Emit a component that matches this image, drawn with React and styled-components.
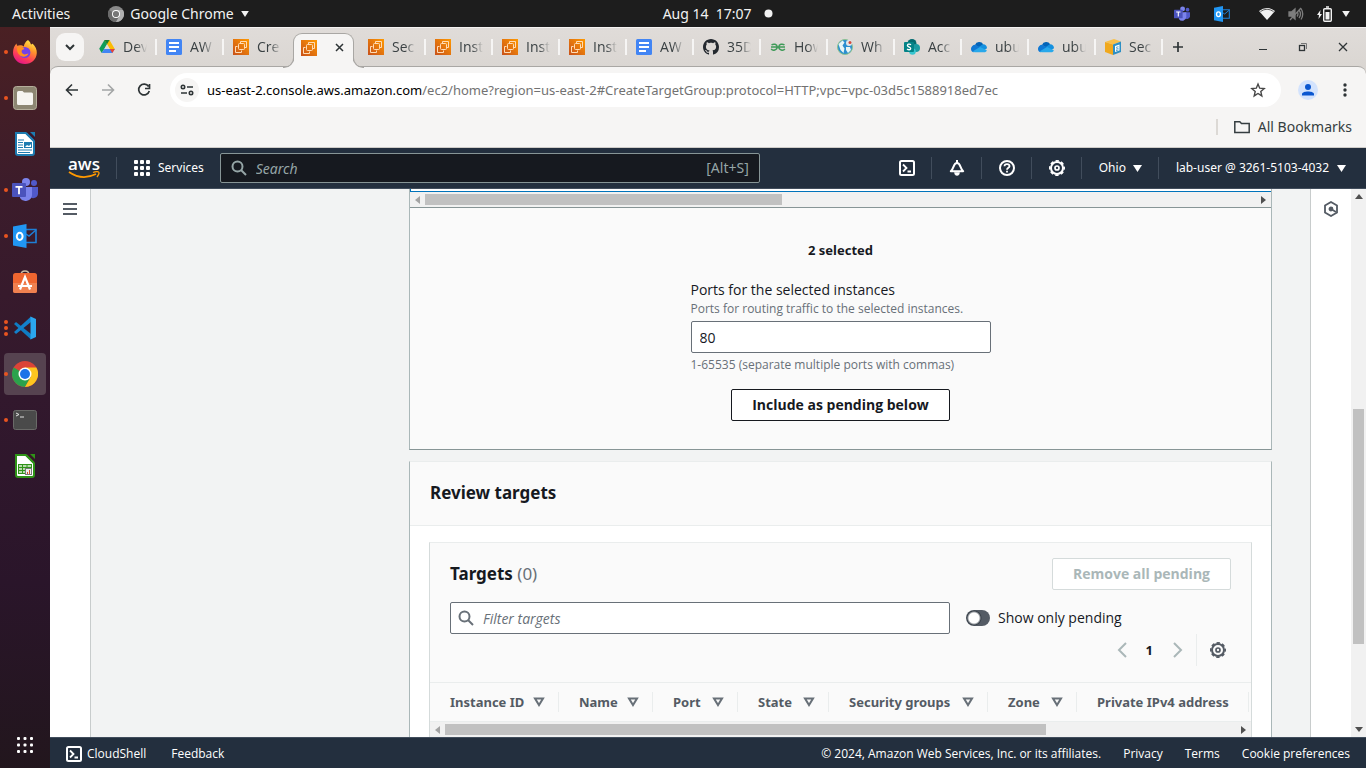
import React from "react";
import styled, { createGlobalStyle, css } from "styled-components";

const sans = `"Noto Sans", "Open Sans", sans-serif`;
const openSans = `"Open Sans", "Noto Sans", sans-serif`;

const Global = createGlobalStyle`
  *, *::before, *::after { box-sizing: border-box; }
  html, body { margin: 0; height: 100%; }
  body { font-family: ${openSans}; font-size: 14px; line-height: 20px; color: #16191f; background: #1d1d1d; }
  button, input { font: inherit; color: inherit; margin: 0; }
  button { background: none; border: 0; padding: 0; }
  a { color: inherit; text-decoration: none; }
  h2, h3, p { margin: 0; }
  svg { display: block; flex: none; }
`;

/* ---------- desktop shell ---------- */

const Desktop = styled.div`
  display: flex;
  flex-direction: column;
  height: 100vh;
  overflow: hidden;
`;

const SystemBar = styled.header`
  display: grid;
  grid-template-columns: 9fr auto 8fr;
  align-items: center;
  flex: none;
  height: 27px;
  padding: 0 15px 0 12px;
  background: #1d1d1d;
  color: #f2f2f2;
  font-family: ${sans};
  font-size: 14px;
`;

const SystemGroup = styled.div`
  display: flex;
  align-items: center;
  justify-content: ${(p) => (p.$end ? "flex-end" : "flex-start")};
  gap: ${(p) => p.$gap}px;
`;

const SystemButton = styled.button`
  display: flex;
  align-items: center;
  gap: 6px;
`;

const Workspace = styled.div`
  display: flex;
  flex: 1;
  min-height: 0;
`;

const Dock = styled.nav`
  display: flex;
  flex-direction: column;
  gap: 4px;
  flex: none;
  width: 50px;
  padding: 4px 4px 2px;
  background: linear-gradient(#4a2023, #3c1c2b 22%, #32182d 50%, #2a152a 75%, #22161d);
`;

const DockItem = styled.button`
  position: relative;
  display: flex;
  align-items: center;
  justify-content: center;
  flex: none;
  height: 42px;
  border-radius: 4px;
  background: ${(p) => (p.$active ? "#564350" : "transparent")};
  margin-top: ${(p) => (p.$last ? "auto" : "0")};
`;

const DockDots = styled.span`
  position: absolute;
  left: 0;
  display: grid;
  gap: 2px;
  i { width: 4px; height: 4px; border-radius: 2px; background: #e95420; }
`;

/* ---------- browser ---------- */

const Browser = styled.div`
  display: flex;
  flex-direction: column;
  flex: 1;
  min-width: 0;
  background: linear-gradient(#e0dcd9, #dad6d2 40px);
`;

const TabStrip = styled.div`
  display: flex;
  align-items: center;
  flex: none;
  height: 40px;
  margin-bottom: -1px;
  padding: 0 16px 1px 6px;
  border-top: 1px solid #f4f2f1;
`;

const TabSearch = styled.button`
  display: grid;
  place-items: center;
  width: 28px;
  height: 28px;
  border-radius: 9px;
  background: #f6f5f4;
  margin-right: 6px;
`;

const Tab = styled.button`
  position: relative;
  display: flex;
  align-items: center;
  flex: none;
  gap: 8px;
  width: 67px;
  height: 16px;
  padding: 0 0 0 9px;
  border-right: 2px solid ${(p) => (p.$noRule ? "transparent" : "#f6f5f4")};
  color: #3a4143;
`;

const TabTitle = styled.span`
  width: 30px;
  overflow: hidden;
  white-space: nowrap;
  text-align: left;
  mask-image: linear-gradient(90deg, #000 13px, transparent 24px);
`;

const flare = css`
  content: "";
  position: absolute;
  bottom: -1px;
  width: 11px;
  height: 11px;
  border-bottom: 1px solid #a9a7a4;
`;

const ActiveTab = styled.div`
  position: relative;
  display: flex;
  align-items: center;
  justify-content: space-between;
  align-self: flex-end;
  flex: none;
  z-index: 1;
  width: 61px;
  height: 34px;
  margin: 0 5px -1px 2px;
  padding: 0 9px 6px 7px;
  border: 1px solid #a9a7a4;
  border-bottom: 0;
  border-radius: 9px 9px 0 0;
  background: #f6f5f4;
  &::before {
    ${flare}
    left: -11px;
    border-right: 1px solid #a9a7a4;
    border-bottom-right-radius: 10px;
    box-shadow: 4px 4px 0 #f6f5f4;
  }
  &::after {
    ${flare}
    right: -11px;
    border-left: 1px solid #a9a7a4;
    border-bottom-left-radius: 10px;
    box-shadow: -4px 4px 0 #f6f5f4;
  }
`;

const WindowButtons = styled.div`
  display: flex;
  gap: 26px;
  margin-left: auto;
`;

const NewTab = styled.button`
  margin-left: 9px;
`;

const BrowserTop = styled.div`
  flex: none;
  border-top: 1px solid #a9a7a4;
  border-bottom: 1px solid #cfccc8;
  border-radius: 8px 8px 0 0;
  background: #f6f5f4;
  overflow: hidden;
`;

const Toolbar = styled.div`
  display: flex;
  align-items: center;
  height: 46px;
  padding: 0 13px 0 14px;
`;

const NavButtons = styled.div`
  display: flex;
  gap: 20px;
  margin-right: 18px;
`;

const Omnibox = styled.div`
  display: flex;
  align-items: center;
  flex: 1;
  min-width: 0;
  height: 34px;
  padding: 0 15px 0 5px;
  border-radius: 17px;
  background: #fff;
`;

const SiteInfo = styled.button`
  display: grid;
  place-items: center;
  width: 24px;
  height: 24px;
  border-radius: 12px;
  background: #f6f5f4;
  margin-right: 8px;
`;

const Url = styled.span`
  flex: 1;
  min-width: 0;
  overflow: hidden;
  white-space: nowrap;
  font-family: ${sans};
  font-size: 13px;
  color: #727272;
  b { font-weight: 400; color: #000; }
`;

const ToolbarEnd = styled.div`
  display: flex;
  align-items: center;
  gap: 19px;
  margin-left: 17px;
`;

const Bookmarks = styled.div`
  display: flex;
  align-items: center;
  justify-content: flex-end;
  height: 34px;
  padding: 0 14px 6px;
`;

const BookmarkFolder = styled.button`
  display: flex;
  align-items: center;
  gap: 8px;
  padding-left: 16px;
  border-left: 2px solid #dcd9d5;
  line-height: 16px;
  font-family: ${sans};
  color: #353d40;
`;

/* ---------- console ---------- */

const ConsoleHeader = styled.header`
  display: flex;
  align-items: center;
  flex: none;
  height: 41px;
  padding: 0 20px 0 18px;
  border-bottom: 1px solid #414d5c;
  background: #232f3e;
  color: #fff;
  font-family: ${sans};
  font-size: 12px;
`;

const AwsLogo = styled.a`
  display: grid;
  justify-items: center;
  width: 32px;
  font-family: ${openSans};
  font-size: 17px;
  font-weight: 600;
  line-height: 12px;
  span { height: 13px; }
`;

const Rule = styled.span`
  flex: none;
  width: 1px;
  height: 22px;
  background: #414d5c;
  margin: 0 17px 0 16px;
`;

const HeaderButton = styled.button`
  display: flex;
  align-items: center;
  gap: ${(p) => p.$gap || 8}px;
  white-space: nowrap;
`;

const HeaderSearch = styled.label`
  display: flex;
  align-items: center;
  flex: 0 1 540px;
  gap: 9px;
  height: 30px;
  margin: 0 auto 0 16px;
  padding: 0 10px;
  border: 1px solid #879596;
  border-radius: 2px;
  background: #16191f;
  color: #95a5a6;
  font-size: 14px;
  input {
    flex: 1;
    min-width: 0;
    padding: 2px 0 0;
    border: 0;
    background: none;
    outline: 0;
  }
  input::placeholder { color: #95a5a6; font-style: italic; opacity: 1; }
`;

const ConsoleBody = styled.div`
  display: flex;
  flex: 1;
  min-height: 0;
  background: #f2f3f3;
`;

const SideRail = styled.aside`
  display: flex;
  justify-content: center;
  align-items: flex-start;
  flex: none;
  width: 41px;
  padding-top: 12px;
  background: #fff;
  border: 0 solid #c8cccc;
  border-width: ${(p) => (p.$right ? "0 0 0 1px" : "0 1px 0 0")};
`;

const Main = styled.main`
  display: grid;
  grid-template-columns: 280px minmax(0, 1fr);
  align-items: start;
  flex: 1;
  min-width: 0;
  padding: 0 38px;
  overflow: hidden;
`;

const Steps = styled.div``;

const Card = styled.section`
  border: 1px solid #aab7b8;
  border-top: ${(p) => (p.$cut ? "0" : "1px solid #eaeded")};
  border-bottom-color: #879596;
  background: #fff;
  margin-bottom: 11px;
`;

const TableTail = styled.div`
  height: 3px;
  border-left: 1px solid #0073bb;
  border-bottom: 1px solid #0073bb;
`;

const ScrollTrack = styled.div`
  display: flex;
  align-items: center;
  flex-direction: ${(p) => (p.$vertical ? "column" : "row")};
  justify-content: space-between;
  flex: none;
  height: ${(p) => (p.$vertical ? "auto" : "15px")};
  width: ${(p) => (p.$vertical ? "15px" : "auto")};
  padding: ${(p) => (p.$vertical ? "5px 0" : "0 5px")};
  background: #f1f1f1;
`;

const ScrollLane = styled.div`
  position: relative;
  flex: 1;
  align-self: stretch;
  margin: ${(p) => (p.$vertical ? "5px 2px" : "2px 5px")};
`;

const ScrollThumb = styled.div`
  position: absolute;
  background: #c1c1c1;
  ${(p) =>
    p.$vertical
      ? css`top: ${p.$start}; height: ${p.$size}; left: 0; right: 0;`
      : css`left: ${p.$start}; width: ${p.$size}; top: 0; bottom: 0;`}
`;

const PendingForm = styled.form`
  display: flex;
  flex-direction: column;
  align-items: center;
  padding: 32px 20px 28px;
  border-top: 1px solid #879596;
  background: #fafafa;
`;

const SelectedCount = styled.p`
  font-family: ${sans};
  font-size: 13px;
  font-weight: 700;
  margin-bottom: 20px;
`;

const Field = styled.div`
  display: flex;
  flex-direction: column;
  width: 300px;
`;

const FieldLabel = styled.label`
  line-height: 20px;
`;

const Hint = styled.p`
  font-size: 12px;
  line-height: ${(p) => (p.$after ? 24 : 18)}px;
  color: #687078;
`;

const PortInput = styled.input`
  height: 32px;
  padding: 0 8px;
  border: 1px solid #687078;
  border-radius: 2px;
  background: #fff;
  margin-top: 3px;
`;

const ActionButton = styled.button`
  height: 32px;
  padding: 0 20px;
  border: 1px solid ${(p) => (p.disabled ? "#d5dbdb" : "#16191f")};
  border-radius: 2px;
  background: #fff;
  color: ${(p) => (p.disabled ? "#aab7b8" : "#16191f")};
  font-weight: 700;
  white-space: nowrap;
`;

const FormAction = styled.div`
  margin-top: 12px;
`;

const CardHeader = styled.div`
  padding: 20px 20px 21px;
  border-bottom: 1px solid #eaeded;
  background: #fafafa;
`;

const Title = styled.h2`
  font-family: ${sans};
  font-size: 17px;
  line-height: 22px;
  font-weight: 700;
  span { font-weight: 400; color: #687078; }
`;

const CardContent = styled.div`
  padding: 16px 19px;
`;

const InnerCard = styled.div`
  border: 1px solid #d5dbdb;
  border-top-color: #eaeded;
  background: #fafafa;
`;

const TargetsHead = styled.div`
  display: flex;
  align-items: center;
  justify-content: space-between;
  padding: 15px 20px 12px;
`;

const FilterRow = styled.div`
  display: flex;
  align-items: center;
  gap: 16px;
  padding: 0 20px;
`;

const FilterBox = styled.label`
  display: flex;
  align-items: center;
  flex: 0 1 500px;
  gap: 9px;
  height: 32px;
  padding: 0 7px;
  border: 1px solid #687078;
  border-radius: 2px;
  background: #fff;
  color: #687078;
  input {
    flex: 1;
    min-width: 0;
    padding: 2px 0 0;
    border: 0;
    outline: 0;
    background: none;
  }
  input::placeholder { color: #687078; font-style: italic; opacity: 1; }
`;

const ToggleLabel = styled.label`
  display: flex;
  align-items: center;
  gap: 8px;
  white-space: nowrap;
`;

const Toggle = styled.input`
  appearance: none;
  width: 24px;
  height: 16px;
  border-radius: 8px;
  background: radial-gradient(circle at 8px 8px, #fff 5px, #3a424b 7px, #545b64 8px);
`;

const Pager = styled.div`
  display: flex;
  align-items: center;
  justify-content: flex-end;
  height: 32px;
  padding: 0 25px 0 20px;
  margin-bottom: 16px;
`;

const PageNumber = styled.button`
  margin: 0 16px;
  font-family: ${sans};
  font-size: 13px;
  font-weight: 700;
`;

const PagerSettings = styled.div`
  display: flex;
  align-items: center;
  height: 32px;
  margin-left: 11px;
  padding-left: 13px;
  border-left: 1px solid #eaeded;
  color: #545b64;
`;

const TableWrap = styled.div`
  overflow: hidden;
  border-top: 1px solid #eaeded;
  border-bottom: 1px solid #eaeded;
`;

const Table = styled.table`
  table-layout: fixed;
  width: 819px;
  border-collapse: collapse;
`;

const HeadCell = styled.th`
  width: ${(p) => p.$width}px;
  height: 38px;
  padding: 0;
`;

const HeadButton = styled.button`
  display: flex;
  align-items: center;
  justify-content: space-between;
  width: 100%;
  height: 20px;
  padding: 0 13px 0 20px;
  border-right: 1px solid #eaeded;
  color: #545b64;
  font-family: ${sans};
  font-size: 13px;
  font-weight: 700;
  white-space: nowrap;
`;

const Footer = styled.footer`
  display: flex;
  align-items: center;
  flex: none;
  height: 31px;
  padding: 1px 16px 0;
  border-top: 1px solid #414d5c;
  background: #232f3e;
  color: #fff;
  font-size: 12px;
  white-space: nowrap;
`;

const FooterGroup = styled.div`
  display: flex;
  align-items: center;
  gap: ${(p) => p.$gap}px;
  margin-left: ${(p) => (p.$end ? "auto" : "0")};
`;

/* ---------- icons ---------- */

const Line = ({ size = 16, box = 16, width = 2, color = "currentColor", children, ...rest }) => (
  <svg width={size} height={size} viewBox={`0 0 ${box} ${box}`} fill="none" stroke={color} strokeWidth={width} aria-hidden="true" {...rest}>
    {children}
  </svg>
);

const Caret = ({ w = 9, h = 7 }) => (
  <svg width={w} height={h} viewBox="0 0 9 7" aria-hidden="true"><path d="M0 0h9L4.500 7z" fill="currentColor" /></svg>
);

const Arrow = ({ dir, color = "#505050" }) => {
  const d = { left: "M5 0v8L0 4z", right: "M0 0v8l5-4z", up: "M0 5h8L4 0z", down: "M0 0h8L4 5z" }[dir];
  const across = dir === "left" || dir === "right";
  return <svg width={across ? 5 : 8} height={across ? 8 : 5} aria-hidden="true"><path d={d} fill={color} /></svg>;
};

const SearchIcon = () => (
  <Line><circle cx="6.500" cy="6.500" r="5" /><path d="M10 10l5 5" /></Line>
);

const ShellIcon = () => (
  <Line><rect x="1" y="1" width="14" height="14" rx="1.500" /><path d="M4 4.500L7.500 8 4 11.500M8.500 11.500H12" strokeWidth="1.800" /></Line>
);

const GearIcon = () => (
  <Line>
    <circle cx="8" cy="8" r="6" />
    <circle cx="8" cy="8" r="7.200" strokeWidth="1.600" strokeDasharray="3.400 2.255" strokeDashoffset="1.700" />
    <circle cx="8" cy="8" r="2" strokeWidth="1.700" />
  </Line>
);

const BellIcon = () => (
  <Line>
    <path d="M8 0v3M1.800 11.200C5 8.500 4.300 3 8 3s3 5.500 6.200 8.200z" strokeLinejoin="round" />
    <path d="M5.500 12.500h5a2.500 3 0 01-5 0z" fill="currentColor" strokeWidth="0.500" />
  </Line>
);

const HelpIcon = () => (
  <Line><circle cx="8" cy="8" r="7" /><path d="M5.500 6.200C5.500 3.300 10.500 3.400 10.500 6.200 10.500 7.800 8 7.800 8 9.800M8 10.800v1.800" strokeWidth="1.800" /></Line>
);

const DotGrid = ({ size, step, dot, round }) => (
  <svg width={size} height={size} aria-hidden="true">
    {[0, 1, 2].map((r) => [0, 1, 2].map((c) => (
      <rect key={`${r}${c}`} x={c * step} y={r * step} width={dot} height={dot} rx={round} fill="#fff" />
    )))}
  </svg>
);

const Ec2Icon = () => (
  <svg width="16" height="16" aria-hidden="true">
    <defs><linearGradient id="ec2" x1="0" y1="1" x2="1" y2="0"><stop offset="0" stopColor="#c8511b" /><stop offset="1" stopColor="#f90" /></linearGradient></defs>
    <rect width="16" height="16" fill="url(#ec2)" />
    <g fill="none" stroke="#ffdcb5" strokeWidth="1"><path d="M7.500 4.500V2.500h6v6h-2" /><rect x="5.500" y="4.500" width="6" height="6" rx="1" /><path d="M4.500 7.500h-2v6h6v-2" /></g>
  </svg>
);

const DriveIcon = () => (
  <svg width="16" height="16" viewBox="0 0 16 16" aria-hidden="true">
    <path d="M5.500 1h5L5.300 10 2.700 14 .2 9.800z" fill="#0f9d58" />
    <path d="M5.500 1h5l5.300 9h-5z" fill="#fbbc04" />
    <path d="M5.300 10h10.500l-2.500 4H2.700z" fill="#4285f4" />
    <path d="M10.800 10h5l-2.500 4z" fill="#ea4335" />
    <path d="M5.500 1h5L8 5.300z" fill="#188038" />
    <path d="M8 5.300l2.800 4.700H5.300z" fill="#e0dcd9" />
  </svg>
);

const DocsIcon = () => (
  <svg width="16" height="16" aria-hidden="true"><rect width="16" height="16" rx="1.500" fill="#4285f4" /><path d="M3 4h10M3 8h10M3 12h7" stroke="#fff" strokeWidth="2" /></svg>
);

const GithubIcon = () => (
  <svg width="16" height="16" viewBox="0 0 16 16" aria-hidden="true">
    <path fill="#24292f" d="M8 0C3.580 0 0 3.580 0 8c0 3.540 2.290 6.530 5.470 7.590.4.070.55-.17.55-.38 0-.19-.01-.82-.01-1.490-2.010.37-2.530-.49-2.690-.94-.09-.23-.48-.94-.82-1.130-.28-.15-.68-.52-.01-.53.63-.01 1.080.58 1.230.82.72 1.210 1.870.87 2.330.66.07-.52.28-.87.51-1.070-1.780-.2-3.640-.89-3.640-3.950 0-.87.31-1.590.82-2.150-.08-.2-.36-1.020.08-2.120 0 0 .67-.21 2.200.82.64-.18 1.320-.27 2-.27s1.360.09 2 .27c1.530-1.040 2.200-.82 2.200-.82.44 1.100.16 1.920.08 2.120.51.56.82 1.270.82 2.150 0 3.070-1.870 3.750-3.650 3.950.29.25.54.73.54 1.480 0 1.070-.01 1.930-.01 2.200 0 .21.15.46.55.38A8.010 8.010 0 0016 8c0-4.420-3.580-8-8-8z" />
  </svg>
);

const GfgIcon = () => (
  <Line width={1.500} color="#3f9a58"><path d="M1.500 6C3.500 4.500 7.200 5 7.200 8s-4.500 4.300-6 1.800M14.500 6C12.500 4.500 8.800 5 8.800 8s4.500 4.300 6 1.800M1 8h14" /></Line>
);

const GlobeIcon = () => (
  <svg width="16" height="16" aria-hidden="true">
    <circle cx="8" cy="8" r="7.500" fill="#2b8fd0" stroke="#8cc28f" />
    <path d="M1.500 5l4-3.500 2 2-2 3 2 3-1 4.500-3-3z" fill="#e8f5f5" /><path d="M9 8l4 0 1 3-3 3-2-3z" fill="#e8f5f5" />
    <circle cx="12" cy="4" r="3" fill="#dfe6ea" /><circle cx="13" cy="3.500" r="1.500" fill="#d34a3a" />
  </svg>
);

const SharePointIcon = () => (
  <svg width="16" height="16" aria-hidden="true">
    <circle cx="8" cy="4.500" r="4.500" fill="#036c70" /><circle cx="12" cy="9" r="4" fill="#1a9ba1" /><circle cx="8.500" cy="12.500" r="3.300" fill="#37c6d0" />
    <rect y="3" width="10" height="10" rx="1" fill="#038387" />
    <path d="M7 5.800C5.500 4.500 3 5.200 3.500 6.800S7 8 6.700 9.700 4 10.700 3 9.900" fill="none" stroke="#fff" strokeWidth="1.300" />
  </svg>
);

const OneDriveIcon = () => (
  <svg width="16" height="16" aria-hidden="true">
    <path d="M4 6a4.600 4.600 0 018.200-.8L9 9z" fill="#0364b8" /><path d="M0 10a4 4 0 014.500-4.100L11 9l-8 4.300A3.300 3.300 0 010 10z" fill="#0f78d4" />
    <path d="M12 5.300c2.700 0 4 1.800 4 4l-3 2-5-3.500z" fill="#1490df" /><path d="M1.500 12.500L9 8l6.800 3.200c-.3 1.300-1.300 2.100-2.800 2.100H4z" fill="#28a8ea" />
  </svg>
);

const BoxIcon = () => (
  <svg width="16" height="16" aria-hidden="true">
    <path d="M0 3l9-3 7 2.500-8 3z" fill="#f7c04a" /><path d="M0 3l8 2.500V16l-8-3z" fill="#f0a81c" /><path d="M8 5.500l8-3V13l-8 3z" fill="#2d8fc4" />
    <path d="M10 7l4.500-1.500v6L10 13z" fill="#fff" /><path d="M11 8.500l2.500-.8M11 10.200l2.500-.8M11 11.700l2.500-.8" stroke="#2d8fc4" strokeWidth="0.800" />
  </svg>
);

const TeamsIcon = ({ size }) => (
  <svg width={size} height={size} viewBox="0 0 26 26" aria-hidden="true">
    <circle cx="22" cy="6" r="3" fill="#5059c9" /><path d="M17 10h9v7a5 5 0 01-9 2z" fill="#5059c9" />
    <circle cx="14" cy="5" r="4" fill="#7b83eb" /><path d="M8 10h12v8a6.500 6.500 0 01-12 3z" fill="#7b83eb" />
    <rect y="6" width="14" height="14" rx="1" fill="#4b53bc" /><path d="M3.500 9.800h7M7 9.800v7.400" stroke="#fff" strokeWidth="1.800" />
  </svg>
);

const OutlookIcon = ({ size }) => (
  <svg width={size} height={size} viewBox="0 0 24 24" aria-hidden="true">
    <path d="M12 5.500h11v13H12" fill="none" stroke="#1e7fd6" strokeWidth="1.600" /><path d="M13 10l3 2 7-6" fill="none" stroke="#1e7fd6" strokeWidth="1.500" />
    <path d="M0 2.500L13.500 0v24L0 21.500z" fill="#2196f3" /><ellipse cx="6.700" cy="12.300" rx="2.900" ry="3.600" fill="none" stroke="#fff" strokeWidth="2" />
  </svg>
);

const FirefoxIcon = () => (
  <svg width="26" height="26" viewBox="0 0 26 26" aria-hidden="true">
    <defs><linearGradient id="ff" x1="0.800" y1="0" x2="0.300" y2="1"><stop offset="0" stopColor="#fff44f" /><stop offset="0.350" stopColor="#ff9a2a" /><stop offset="0.700" stopColor="#ff4056" /><stop offset="1" stopColor="#e1148b" /></linearGradient></defs>
    <path d="M16 1c2 1.500 2.500 3 3 4.500 1 0 1.500-1 1.500-1 3 3 4.500 6 4.300 9.500C24.500 20.500 19.500 25 13 25S1 20.200 1 13.500C1 9.800 2.500 6.500 4.500 4.500l.5 2.200 3-.5c1.500 0 3 .3 3.800 1.300C12 5 13.500 2.500 16 1z" fill="url(#ff)" />
    <circle cx="12.800" cy="13.500" r="5.600" fill="#7542e5" /><path d="M5 8.500c3-1 6-.5 7.500 1.500L10 11c-1 2 0 4 2.500 4.500 1.500 0 2.500-1 4-1-1 3-6 4.500-9 1.500-2-2-2.800-4.500-2.500-7.500z" fill="#ff8f1f" />
  </svg>
);

const FilesIcon = () => (
  <svg width="24" height="24" aria-hidden="true"><rect x="0.500" y="0.500" width="23" height="23" rx="3" fill="#8d8672" stroke="#b5ae9b" /><path d="M4 6.500Q4 5 5.500 5h4l1.500 1.500h7.500Q20 6.500 20 8v9.500q0 1.500-1.500 1.500h-13Q4 19 4 17.500z" fill="#f6f4f0" /></svg>
);

const OfficeIcon = ({ color, sheet }) => (
  <svg width="22" height="24" aria-hidden="true">
    <path d="M2 1h10l8 8v12q0 2-2 2H4q-2 0-2-2z" fill="#fff" stroke={color} strokeWidth="2" />
    <path d="M12 0h9v9z" fill="#38172a" /><path d="M12 1l8 8" stroke={color} strokeWidth="2" /><path d="M16 0h5v5z" fill={color} />
    {sheet ? (
      <><rect x="4" y="10" width="14" height="10" fill={color} /><path d="M5 12h12M5 15h12M5 18h6" stroke="#e4f4dc" strokeWidth="1.500" /><path d="M8.500 10v10M13 10v10" stroke={color} /><rect x="11.500" y="14.500" width="6" height="6" fill="#eee" stroke="#777" /><path d="M13.500 20v-2M15.500 20v-4" stroke="#d0512b" /></>
    ) : (
      <><path d="M4 8h6M4 10.500h5M4 13h5M4 15.500h5M4 18h14M4 20.500h12" stroke={color} strokeWidth="1.200" /><rect x="10" y="10" width="8" height="6" fill={color} /><path d="M11 15l2-2 2 1 2-2v3z" fill="#fff" /></>
    )}
  </svg>
);

const SoftwareIcon = () => (
  <svg width="24" height="24" aria-hidden="true">
    <path d="M8 5Q8 1 12 1t4 4" fill="none" stroke="#c9bfa8" strokeWidth="1.500" /><rect y="3" width="24" height="20" rx="2.500" fill="#ef6630" /><path d="M0 13h24v8q0 2-2 2H2q-2 0-2-2z" fill="#f08150" />
    <path d="M7 19.500L12 7l5 12.500M5 16h14" fill="none" stroke="#fff" strokeWidth="2.200" />
  </svg>
);

const CodeIcon = () => (
  <svg width="24" height="24" aria-hidden="true">
    <path d="M1 8l2-2 15 12v5.500z" fill="#0f7cc4" /><path d="M1 16l2 2L18 6V.5z" fill="#1380cc" /><path d="M17.500.5L23 3v18l-5.500 2.500z" fill="#2ba6ee" />
  </svg>
);

const ChromeIcon = ({ size = 26, gray }) => (
  <svg width={size} height={size} viewBox="0 0 26 26" aria-hidden="true">
    <circle cx="13" cy="13" r="13" fill={gray ? "#8a8a8a" : "#db4437"} />
    <path d="M13 13L1.740 6.500A13 13 0 0013 26l5.600-9.800z" fill={gray ? "#6b6b6b" : "#2ba24c"} />
    <path d="M13 13l5.600 3.200L13 26A13 13 0 0024.300 6.500H13z" fill={gray ? "#b0b0b0" : "#fdc61f"} />
    <circle cx="13" cy="13" r="6.500" fill="#fff" /><circle cx="13" cy="13" r="5" fill={gray ? "#777" : "#1a73e8"} />
  </svg>
);

const TerminalIcon = () => (
  <svg width="24" height="20" aria-hidden="true"><rect x="0.500" y="0.500" width="23" height="19" rx="2" fill="#4a4a4a" stroke="#6a6a68" /><path d="M3 3l3 1.500L3 6M7 7h4" fill="none" stroke="#e0e0e0" /></svg>
);

/* ---------- data ---------- */

const dockApps = [
  { name: "Firefox", icon: <FirefoxIcon />, dots: 1 },
  { name: "Files", icon: <FilesIcon />, dots: 1 },
  { name: "LibreOffice Writer", icon: <OfficeIcon color="#1d7bb0" />, dots: 0 },
  { name: "Teams", icon: <TeamsIcon size={26} />, dots: 1 },
  { name: "Outlook", icon: <OutlookIcon size={24} />, dots: 1 },
  { name: "Software", icon: <SoftwareIcon />, dots: 0 },
  { name: "Code", icon: <CodeIcon />, dots: 3 },
  { name: "Chrome", icon: <ChromeIcon />, dots: 1, active: true },
  { name: "Terminal", icon: <TerminalIcon />, dots: 1 },
  { name: "LibreOffice Calc", icon: <OfficeIcon color="#2f9318" sheet />, dots: 0 },
];

const tabs = [
  { title: "Dev", icon: <DriveIcon /> },
  { title: "AW", icon: <DocsIcon /> },
  { title: "Cre", icon: <Ec2Icon />, noRule: true },
  { active: true },
  { title: "Sec", icon: <Ec2Icon /> },
  { title: "Inst", icon: <Ec2Icon /> },
  { title: "Inst", icon: <Ec2Icon /> },
  { title: "Inst", icon: <Ec2Icon /> },
  { title: "AW", icon: <DocsIcon /> },
  { title: "35D", icon: <GithubIcon /> },
  { title: "How", icon: <GfgIcon /> },
  { title: "Wh", icon: <GlobeIcon /> },
  { title: "Acc", icon: <SharePointIcon /> },
  { title: "ubu", icon: <OneDriveIcon /> },
  { title: "ubu", icon: <OneDriveIcon /> },
  { title: "Sec", icon: <BoxIcon /> },
];

const columns = [
  ["Instance ID", 129],
  ["Name", 94],
  ["Port", 85],
  ["State", 91],
  ["Security groups", 159],
  ["Zone", 89],
  ["Private IPv4 address", 172],
];

/* ---------- sections ---------- */

const SystemStatus = () => (
  <SystemBar>
    <SystemGroup $gap={38}>
      <SystemButton>Activities</SystemButton>
      <SystemButton><ChromeIcon size={16} gray />Google Chrome <Caret w={10} h={6} /></SystemButton>
    </SystemGroup>
    <SystemGroup $gap={12}>
      <span>Aug 14&nbsp; 17:07</span>
      <svg width="9" height="9" aria-hidden="true"><circle cx="4.500" cy="4.500" r="4" fill="#f2f2f2" /></svg>
    </SystemGroup>
    <SystemGroup $gap={29} $end>
      <SystemGroup $gap={24}>
        <TeamsIcon size={16} />
        <OutlookIcon size={16} />
      </SystemGroup>
      <SystemGroup $gap={13}>
        <svg width="16" height="14" aria-hidden="true"><path d="M0 4Q8-2 16 4L8 13z" fill="#f2f2f2" /><path d="M1.500 4.500Q8 0 14.500 4.500" fill="none" stroke="#1d1d1d" strokeWidth="0.700" /></svg>
        <Line color="#7d7d7d" width={1.300}><path d="M1 6h2.500L7 3v10L3.500 10H1z" fill="#7d7d7d" /><path d="M9 5.500q2 2.500 0 5M11 4q3 4 0 8M13 2.500q3.500 5.500 0 11M2 14L13 2" /></Line>
        <SystemGroup $gap={9}>
          <svg width="15" height="16" aria-hidden="true"><path d="M3.500 4L0 9h2l-.5 4L5 8H3z" fill="#f2f2f2" /><rect x="6.700" y="2.700" width="7.600" height="12.600" rx="1" fill="none" stroke="#f2f2f2" strokeWidth="1.400" /><path d="M9 1h3" stroke="#f2f2f2" strokeWidth="1.500" /><path d="M8.500 6h4v7.500h-4z" fill="#f2f2f2" /></svg>
          <Caret w={10} h={6} />
        </SystemGroup>
      </SystemGroup>
    </SystemGroup>
  </SystemBar>
);

const BrowserChrome = () => (
  <>
    <TabStrip>
      <TabSearch aria-label="Search tabs"><Line size={10} box={10} color="#2e3436"><path d="M1 3l4 4 4-4" /></Line></TabSearch>
      {tabs.map((t, i) =>
        t.active ? (
          <ActiveTab key={i}>
            <Ec2Icon />
            <button aria-label="Close tab"><Line size={9} box={9} color="#2e3436" width={1.500}><path d="M1 1l7 7M8 1L1 8" /></Line></button>
          </ActiveTab>
        ) : (
          <Tab key={i} $noRule={t.noRule}>{t.icon}<TabTitle>{t.title}</TabTitle></Tab>
        )
      )}
      <NewTab aria-label="New tab"><Line size={12} box={12} color="#2e3436" width={1.700}><path d="M6 1v10M1 6h10" /></Line></NewTab>
      <WindowButtons>
        <button aria-label="Minimize"><Line size={14} box={14} color="#2e3436" width={1}><path d="M3 9.500h8" /></Line></button>
        <button aria-label="Restore"><Line size={14} box={14} color="#2e3436" width={1}><rect x="3.500" y="5.500" width="5" height="5" strokeWidth="1.300" /><path d="M5 3.500h5.500V9" stroke="#777" /></Line></button>
        <button aria-label="Close"><Line size={14} box={14} color="#2e3436" width={1.300}><path d="M3 3l8 8M11 3l-8 8" /></Line></button>
      </WindowButtons>
    </TabStrip>
    <BrowserTop>
      <Toolbar>
        <NavButtons>
          <button aria-label="Back"><Line color="#2e3436" width={1.600}><path d="M14 8H3M8 2.500L2.500 8 8 13.500" /></Line></button>
          <button aria-label="Forward"><Line color="#a3a5a5" width={1.600}><path d="M2 8h11M8 2.500L13.500 8 8 13.500" /></Line></button>
          <button aria-label="Reload"><Line color="#2e3436" width={1.700}><path d="M12.600 4.500A5.400 5.400 0 1013.300 9M13.500 2v4.500H9" /></Line></button>
        </NavButtons>
        <Omnibox>
          <SiteInfo aria-label="Site information"><Line size={14} box={14} color="#2e3436" width={1.600}><circle cx="3" cy="4" r="1.700" /><path d="M7 4h6M1 10h6" /><circle cx="11" cy="10" r="1.700" /></Line></SiteInfo>
          <Url><b>us-east-2.console.aws.amazon.com</b>/ec2/home?region=us-east-2#CreateTargetGroup:protocol=HTTP;vpc=vpc-03d5c1588918ed7ec</Url>
          <button aria-label="Bookmark"><Line color="#474747" width={1.400}><path d="M8 2l1.700 4.200 4.500.4-3.400 2.900 1 4.400L8 11.500l-3.800 2.400 1-4.400-3.400-2.900 4.500-.4z" /></Line></button>
        </Omnibox>
        <ToolbarEnd>
          <button aria-label="Profile"><svg width="20" height="20" aria-hidden="true"><circle cx="10" cy="10" r="10" fill="#d3e3fd" /><circle cx="10" cy="7" r="3" fill="#0b57d0" /><path d="M4 15.500v-1.500c0-3.500 12-3.500 12 0v1.500z" fill="#0b57d0" /></svg></button>
          <button aria-label="Menu"><svg width="16" height="16" aria-hidden="true"><g fill="#2e3436"><circle cx="8" cy="3" r="1.700" /><circle cx="8" cy="8" r="1.700" /><circle cx="8" cy="13" r="1.700" /></g></svg></button>
        </ToolbarEnd>
      </Toolbar>
      <Bookmarks>
        <BookmarkFolder><Line width={1.500}><path d="M.8 2.800h5L7.500 4.500h7.700v9H.8z" /></Line>All Bookmarks</BookmarkFolder>
      </Bookmarks>
    </BrowserTop>
  </>
);

const Header = () => (
  <ConsoleHeader>
    <AwsLogo href="#home">
      <span>aws</span>
      <svg width="32" height="8" aria-hidden="true"><path d="M1 1Q14 10 28 3" fill="none" stroke="#f90" strokeWidth="1.800" /><path d="M25 1.500Q29 0 30.500 1T29 6" fill="none" stroke="#f90" strokeWidth="1.300" /></svg>
    </AwsLogo>
    <Rule />
    <HeaderButton><DotGrid size={16} step={6} dot={4} round={1} />Services</HeaderButton>
    <HeaderSearch>
      <SearchIcon />
      <input type="search" placeholder="Search" aria-label="Search" />
      [Alt+S]
    </HeaderSearch>
    <HeaderButton aria-label="CloudShell"><ShellIcon /></HeaderButton>
    <Rule />
    <HeaderButton aria-label="Notifications"><BellIcon /></HeaderButton>
    <Rule />
    <HeaderButton aria-label="Help"><HelpIcon /></HeaderButton>
    <Rule />
    <HeaderButton aria-label="Settings"><GearIcon /></HeaderButton>
    <Rule />
    <HeaderButton $gap={7}>Ohio <Caret /></HeaderButton>
    <Rule />
    <HeaderButton>lab-user @ 3261-5103-4032 <Caret /></HeaderButton>
  </ConsoleHeader>
);

const HorizontalScroll = ({ size }) => (
  <ScrollTrack>
    <Arrow dir="left" color="#a3a3a3" />
    <ScrollLane><ScrollThumb $start="0" $size={size} /></ScrollLane>
    <Arrow dir="right" />
  </ScrollTrack>
);

const PortsCard = () => (
  <Card $cut>
    <TableTail />
    <HorizontalScroll size="43%" />
    <PendingForm onSubmit={(e) => e.preventDefault()}>
      <SelectedCount>2 selected</SelectedCount>
      <Field>
        <FieldLabel htmlFor="ports">Ports for the selected instances</FieldLabel>
        <Hint>Ports for routing traffic to the selected instances.</Hint>
        <PortInput id="ports" type="text" defaultValue="80" />
        <Hint $after>1-65535 (separate multiple ports with commas)</Hint>
      </Field>
      <FormAction><ActionButton>Include as pending below</ActionButton></FormAction>
    </PendingForm>
  </Card>
);

const ReviewCard = () => (
  <Card>
    <CardHeader><Title>Review targets</Title></CardHeader>
    <CardContent>
      <InnerCard>
        <TargetsHead>
          <Title as="h3">Targets <span>(0)</span></Title>
          <ActionButton disabled>Remove all pending</ActionButton>
        </TargetsHead>
        <FilterRow>
          <FilterBox><SearchIcon /><input type="search" placeholder="Filter targets" aria-label="Filter targets" /></FilterBox>
          <ToggleLabel><Toggle type="checkbox" role="switch" />Show only pending</ToggleLabel>
        </FilterRow>
        <Pager>
          <button aria-label="Previous page"><Line color="#aab7b8"><path d="M12 1L5 8l7 7" /></Line></button>
          <PageNumber>1</PageNumber>
          <button aria-label="Next page"><Line color="#aab7b8"><path d="M5 1l7 7-7 7" /></Line></button>
          <PagerSettings><button aria-label="Preferences"><GearIcon /></button></PagerSettings>
        </Pager>
        <TableWrap>
          <Table>
            <thead>
              <tr>
                {columns.map(([name, width], i) => (
                  <HeadCell key={name} $width={width} scope="col">
                    <HeadButton>
                      {name}
                      {i < 6 && <Line size={12} box={12} color="#687078"><path d="M2 2.500h8L6 9z" /></Line>}
                    </HeadButton>
                  </HeadCell>
                ))}
              </tr>
            </thead>
          </Table>
        </TableWrap>
        <HorizontalScroll size="76%" />
      </InnerCard>
    </CardContent>
  </Card>
);

export default function App() {
  return (
    <Desktop>
      <Global />
      <SystemStatus />
      <Workspace>
        <Dock aria-label="Applications">
          {dockApps.map((app) => (
            <DockItem key={app.name} $active={app.active} aria-label={app.name}>
              <DockDots>{Array.from({ length: app.dots }, (_, i) => <i key={i} />)}</DockDots>
              {app.icon}
            </DockItem>
          ))}
          <DockItem $last aria-label="Show applications"><DotGrid size={16} step={6.5} dot={3} round={1} /></DockItem>
        </Dock>
        <Browser>
          <BrowserChrome />
          <Header />
          <ConsoleBody>
            <SideRail><button aria-label="Open navigation"><Line color="#545b64"><path d="M1 3h14M1 8h14M1 13h14" /></Line></button></SideRail>
            <Main>
              <Steps />
              <div>
                <PortsCard />
                <ReviewCard />
              </div>
            </Main>
            <SideRail $right><button aria-label="Open help"><Line color="#545b64" width={1.800}><path d="M8 1l6 3.500v7L8 15l-6-3.500v-7z" /><circle cx="8" cy="8" r="1.500" fill="#545b64" /><path d="M8 8l5 3" /></Line></button></SideRail>
            <ScrollTrack $vertical>
              <Arrow dir="up" />
              <ScrollLane $vertical><ScrollThumb $vertical $start="39.5%" $size="45.5%" /></ScrollLane>
              <Arrow dir="down" />
            </ScrollTrack>
          </ConsoleBody>
          <Footer>
            <FooterGroup $gap={25}>
              <HeaderButton $gap={5}><ShellIcon />CloudShell</HeaderButton>
              <a href="#feedback">Feedback</a>
            </FooterGroup>
            <FooterGroup $gap={22} $end>
              <span>© 2024, Amazon Web Services, Inc. or its affiliates.</span>
              <a href="#privacy">Privacy</a>
              <a href="#terms">Terms</a>
              <a href="#cookies">Cookie preferences</a>
            </FooterGroup>
          </Footer>
        </Browser>
      </Workspace>
    </Desktop>
  );
}
